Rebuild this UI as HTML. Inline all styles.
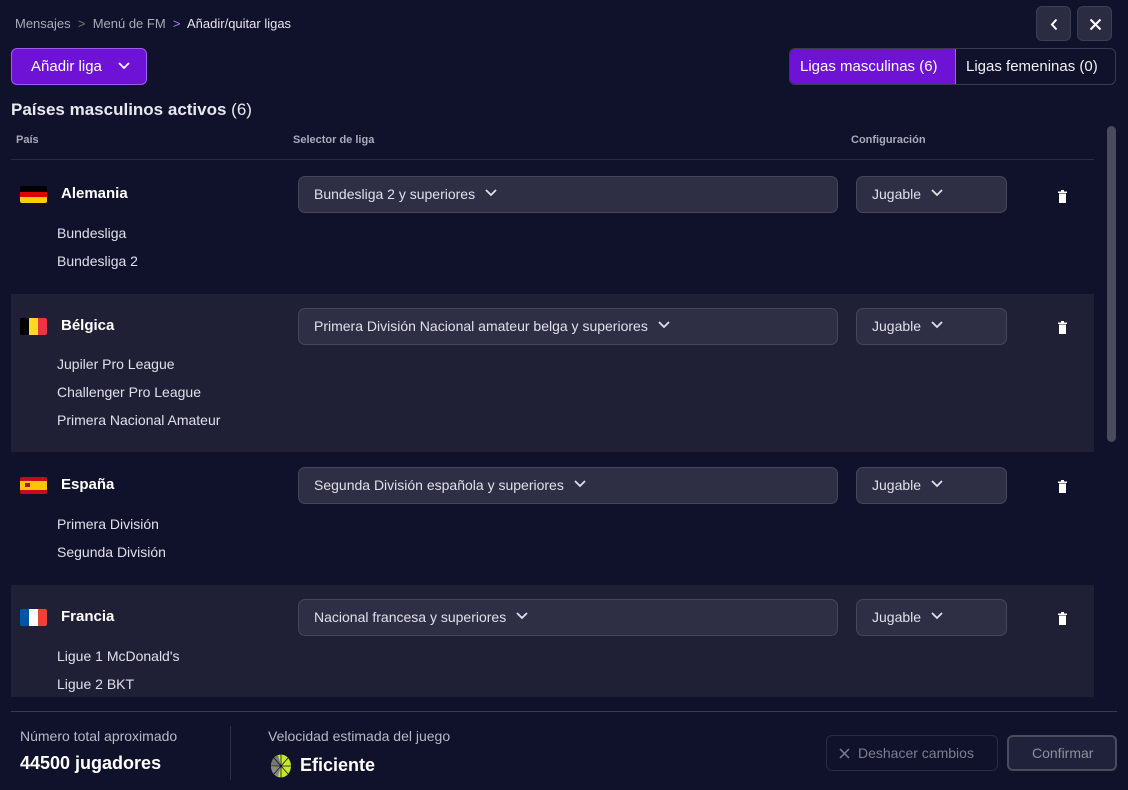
<!DOCTYPE html>
<html><head><meta charset="utf-8"><style>
*{box-sizing:border-box;margin:0;padding:0}
body{width:1128px;height:790px;background:#10112a;font-family:"Liberation Sans",sans-serif;color:#e8e8f0;position:relative;overflow:hidden}
.a{position:absolute}
.crumb{left:15px;top:16px;font-size:13px;color:#a9aabb}
.crumb b{font-weight:normal;color:#e6e6ee}
.ib{width:35px;height:35px;border-radius:6px;background:#2b2c42;border:1px solid #3d3e55;top:6px}
.btnp{left:11px;top:48px;width:136px;height:37px;background:#6e12d6;border:1px solid #9a5ef0;border-radius:6px;font-size:15px;color:#fff;padding:9px 0 0 19px}
.tabs{left:789px;top:48px;width:327px;height:37px;border:1px solid #3a3b52;border-radius:6px;overflow:hidden;display:flex;font-size:15px}
.tabs div{padding:9px 0 0 10px}
h1{left:11px;top:100px;font-size:17px;font-weight:bold;color:#e8e8f0}
h1 span{font-weight:normal}
.th{top:134px;font-size:11px;font-weight:bold;color:#a9aabb}
.hr{left:11px;top:159px;width:1083px;height:1px;background:#2a2b40}
.row{left:11px;width:1083px}
.flag{width:27px;height:17px;border-radius:2px;overflow:hidden;display:flex}
.cn{font-size:15px;font-weight:bold;color:#fff}
.lg{font-size:14px;color:#e0e0ea}
.dd{height:37px;background:#2e2f45;border:1px solid #45465c;border-radius:7px;font-size:14px;color:#e0e0ea;padding:9px 0 0 15px}
.chev{display:inline-block;margin-left:10px;vertical-align:2px}
.trash{width:9px;height:13px}
.sb{left:1107px;top:126px;width:9px;height:316px;border-radius:5px;background:#4a4b5f}
</style></head><body>
<div class="a crumb">Mensajes &nbsp;<span style="color:#777">&gt;</span>&nbsp; Menú de FM &nbsp;<span style="color:#a87af0">&gt;</span>&nbsp; <b>Añadir/quitar ligas</b></div>
<div class="a ib" style="left:1036px"><svg width="35" height="35"><path d="M19.5 12.5l-4.5 5 4.5 5" stroke="#fff" stroke-width="2" fill="none"/></svg></div>
<div class="a ib" style="left:1077px"><svg width="35" height="35"><path d="M12.5 12.5l10 10M22.5 12.5l-10 10" stroke="#fff" stroke-width="2" fill="none"/></svg></div>
<div class="a btnp">Añadir liga <svg class="chev" width="12" height="8" style="margin-left:12px;vertical-align:1px"><path d="M1 1l5 5 5-5" stroke="#fff" stroke-width="1.8" fill="none"/></svg></div>
<div class="a tabs"><div style="width:166px;background:#6e12d6;border-right:1px solid #9a5ef0;color:#fff">Ligas masculinas (6)</div><div style="color:#f0f0f5">Ligas femeninas (0)</div></div>
<div class="a" style="left:0;top:0"></div>
<h1 class="a">Países masculinos activos <span>(6)</span></h1>
<div class="a th" style="left:16px">País</div>
<div class="a th" style="left:293px">Selector de liga</div>
<div class="a th" style="left:851px">Configuración</div>
<div class="a hr"></div>

<!-- rows -->
<div class="a row" style="top:160px;height:134px"></div>
<div class="a row" style="top:294px;height:158px;background:#1f2035"></div>
<div class="a row" style="top:452px;height:133px"></div>
<div class="a row" style="top:585px;height:112px;background:#1f2035"></div>

<!-- Alemania -->
<div class="a flag" style="left:20px;top:186px;flex-direction:column"><i style="flex:1;background:#000"></i><i style="flex:1;background:#dd0000"></i><i style="flex:1;background:#ffce00"></i></div>
<div class="a cn" style="left:61px;top:185px">Alemania</div>
<div class="a lg" style="left:57px;top:225px">Bundesliga</div>
<div class="a lg" style="left:57px;top:253px">Bundesliga 2</div>
<div class="a dd" style="left:298px;top:176px;width:540px">Bundesliga 2 y superiores<svg class="chev" width="12" height="8"><path d="M1 1l5 5 5-5" stroke="#e0e0ea" stroke-width="1.8" fill="none"/></svg></div>
<div class="a dd" style="left:856px;top:176px;width:151px">Jugable<svg class="chev" width="12" height="8"><path d="M1 1l5 5 5-5" stroke="#e0e0ea" stroke-width="1.8" fill="none"/></svg></div>
<svg class="a trash" style="left:1058px;top:190px" viewBox="0 0 9 13"><rect x="0" y="1.5" width="9" height="1.5" fill="#fff"/><rect x="3" y="0" width="3" height="2" fill="#fff"/><rect x="1" y="3.5" width="7" height="9.5" fill="#fff"/></svg>

<!-- Bélgica -->
<div class="a flag" style="left:20px;top:318px"><i style="flex:1;background:#000"></i><i style="flex:1;background:#fdda24"></i><i style="flex:1;background:#ef3340"></i></div>
<div class="a cn" style="left:61px;top:317px">Bélgica</div>
<div class="a lg" style="left:57px;top:356px">Jupiler Pro League</div>
<div class="a lg" style="left:57px;top:384px">Challenger Pro League</div>
<div class="a lg" style="left:57px;top:412px">Primera Nacional Amateur</div>
<div class="a dd" style="left:298px;top:308px;width:540px">Primera División Nacional amateur belga y superiores<svg class="chev" width="12" height="8"><path d="M1 1l5 5 5-5" stroke="#e0e0ea" stroke-width="1.8" fill="none"/></svg></div>
<div class="a dd" style="left:856px;top:308px;width:151px">Jugable<svg class="chev" width="12" height="8"><path d="M1 1l5 5 5-5" stroke="#e0e0ea" stroke-width="1.8" fill="none"/></svg></div>
<svg class="a trash" style="left:1058px;top:321px" viewBox="0 0 9 13"><rect x="0" y="1.5" width="9" height="1.5" fill="#fff"/><rect x="3" y="0" width="3" height="2" fill="#fff"/><rect x="1" y="3.5" width="7" height="9.5" fill="#fff"/></svg>

<!-- España -->
<div class="a flag" style="left:20px;top:477px;flex-direction:column"><i style="flex:1;background:#c60b1e"></i><i style="flex:2;background:#ffc400;position:relative"><b style="position:absolute;left:5px;top:2px;width:5px;height:4px;background:#ad1519"></b></i><i style="flex:1;background:#c60b1e"></i></div>
<div class="a cn" style="left:61px;top:476px">España</div>
<div class="a lg" style="left:57px;top:516px">Primera División</div>
<div class="a lg" style="left:57px;top:544px">Segunda División</div>
<div class="a dd" style="left:298px;top:467px;width:540px">Segunda División española y superiores<svg class="chev" width="12" height="8"><path d="M1 1l5 5 5-5" stroke="#e0e0ea" stroke-width="1.8" fill="none"/></svg></div>
<div class="a dd" style="left:856px;top:467px;width:151px">Jugable<svg class="chev" width="12" height="8"><path d="M1 1l5 5 5-5" stroke="#e0e0ea" stroke-width="1.8" fill="none"/></svg></div>
<svg class="a trash" style="left:1058px;top:480px" viewBox="0 0 9 13"><rect x="0" y="1.5" width="9" height="1.5" fill="#fff"/><rect x="3" y="0" width="3" height="2" fill="#fff"/><rect x="1" y="3.5" width="7" height="9.5" fill="#fff"/></svg>

<!-- Francia -->
<div class="a flag" style="left:20px;top:609px"><i style="flex:1;background:#0055a4"></i><i style="flex:1;background:#fff"></i><i style="flex:1;background:#ef4135"></i></div>
<div class="a cn" style="left:61px;top:608px">Francia</div>
<div class="a lg" style="left:57px;top:648px">Ligue 1 McDonald's</div>
<div class="a lg" style="left:57px;top:676px">Ligue 2 BKT</div>
<div class="a dd" style="left:298px;top:599px;width:540px">Nacional francesa y superiores<svg class="chev" width="12" height="8"><path d="M1 1l5 5 5-5" stroke="#e0e0ea" stroke-width="1.8" fill="none"/></svg></div>
<div class="a dd" style="left:856px;top:599px;width:151px">Jugable<svg class="chev" width="12" height="8"><path d="M1 1l5 5 5-5" stroke="#e0e0ea" stroke-width="1.8" fill="none"/></svg></div>
<svg class="a trash" style="left:1058px;top:612px" viewBox="0 0 9 13"><rect x="0" y="1.5" width="9" height="1.5" fill="#fff"/><rect x="3" y="0" width="3" height="2" fill="#fff"/><rect x="1" y="3.5" width="7" height="9.5" fill="#fff"/></svg>

<div class="a" style="left:0;top:697px;width:1128px;height:93px;background:#10112a"></div>
<div class="a sb"></div>
<div class="a" style="left:11px;top:711px;width:1106px;height:1px;background:#3a3b50"></div>
<div class="a" style="left:20px;top:728px;font-size:14px;color:#b8b9c8">Número total aproximado</div>
<div class="a" style="left:20px;top:753px;font-size:18px;font-weight:bold;color:#fff">44500 jugadores</div>
<div class="a" style="left:230px;top:726px;width:1px;height:54px;background:#2e2f44"></div>
<div class="a" style="left:268px;top:728px;font-size:14px;color:#b8b9c8">Velocidad estimada del juego</div>
<svg class="a" style="left:270px;top:754px" width="22" height="24" viewBox="0 0 22 24"><ellipse cx="11" cy="12" rx="10" ry="11.5" fill="#c8e62a"/><path d="M11 12L1 12A10 11.5 0 0 1 8 1Z" fill="#777"/><path d="M11 12L1 13A10 11.5 0 0 0 8 23Z" fill="#888"/><path d="M11 .5V23.5M1 12H21M4 4l14 16M18 4L4 20" stroke="#10112a" stroke-width=".8"/></svg>
<div class="a" style="left:300px;top:755px;font-size:18px;font-weight:bold;color:#fff">Eficiente</div>
<div class="a" style="left:826px;top:735px;width:172px;height:36px;border:1px solid #2c2d42;border-radius:6px;font-size:14px;color:#7d7e90;padding:9px 0 0 12px"><svg width="11" height="11" style="margin-right:8px;vertical-align:-1px"><path d="M1 1l9 9M10 1l-9 9" stroke="#7d7e90" stroke-width="1.5"/></svg>Deshacer cambios</div>
<div class="a" style="left:1007px;top:735px;width:110px;height:36px;border:2px solid #4a4b5f;background:#20213a;border-radius:6px;font-size:14px;color:#8e8fa0;padding:8px 0 0 23px">Confirmar</div>
</body></html>
